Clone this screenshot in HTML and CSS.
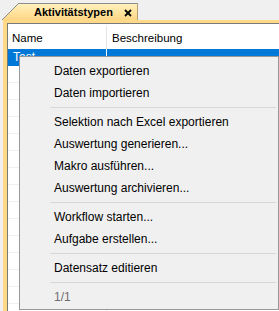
FILE: index.html
```html
<!DOCTYPE html>
<html lang="de">

<head>
    <meta charset="UTF-8">
    <meta name="viewport" content="width=device-width, initial-scale=1.0">
    <title>Aktivitätstypen</title>
    <link rel="stylesheet" href="styles.css">
</head>

<body>
    <div class="window">
        <div class="tabstrip">
            <div class="tab">
                <svg class="tab-corner" width="17" height="17" viewBox="0 0 17 17">
                    <defs>
                        <linearGradient id="tabFill" x1="0" y1="0" x2="0" y2="1">
                            <stop offset="0" stop-color="#fff1bd" />
                            <stop offset="1" stop-color="#ffd684" />
                        </linearGradient>
                    </defs>
                    <polygon points="0,17 17,0 17,17" fill="url(#tabFill)" />
                    <line x1="0" y1="17" x2="17" y2="0" stroke="#8c8c8c" stroke-width="1" />
                </svg>
                <div class="tab-body">
                    <span class="tab-title">Aktivitätstypen</span>
                    <svg class="tab-close" width="8" height="8" viewBox="0 0 8 8">
                        <path d="M1 1 L7 7 M7 1 L1 7" stroke="#000" stroke-width="1.8" />
                    </svg>
                </div>
            </div>
        </div>

        <div class="frame">
            <div class="grid">
                <div class="grid-head">
                    <div class="cell col-name">Name</div>
                    <div class="cell col-desc">Beschreibung</div>
                </div>
                <div class="grid-row selected">
                    <div class="cell col-name">Test</div>
                    <div class="cell col-desc"></div>
                </div>
                <div class="grid-row"><div class="cell col-name"></div><div class="cell col-desc"></div></div>
                <div class="grid-row"><div class="cell col-name"></div><div class="cell col-desc"></div></div>
                <div class="grid-row"><div class="cell col-name"></div><div class="cell col-desc"></div></div>
                <div class="grid-row"><div class="cell col-name"></div><div class="cell col-desc"></div></div>
                <div class="grid-row"><div class="cell col-name"></div><div class="cell col-desc"></div></div>
                <div class="grid-row"><div class="cell col-name"></div><div class="cell col-desc"></div></div>
                <div class="grid-row"><div class="cell col-name"></div><div class="cell col-desc"></div></div>
                <div class="grid-row"><div class="cell col-name"></div><div class="cell col-desc"></div></div>
                <div class="grid-row"><div class="cell col-name"></div><div class="cell col-desc"></div></div>
                <div class="grid-row"><div class="cell col-name"></div><div class="cell col-desc"></div></div>
                <div class="grid-row"><div class="cell col-name"></div><div class="cell col-desc"></div></div>
                <div class="grid-row"><div class="cell col-name"></div><div class="cell col-desc"></div></div>
                <div class="grid-row"><div class="cell col-name"></div><div class="cell col-desc"></div></div>
                <div class="grid-row"><div class="cell col-name"></div><div class="cell col-desc"></div></div>
                <div class="grid-row"><div class="cell col-name"></div><div class="cell col-desc"></div></div>
            </div>
        </div>

        <div class="context-menu">
            <div class="menu-item">Daten exportieren</div>
            <div class="menu-item">Daten importieren</div>
            <div class="menu-sep"></div>
            <div class="menu-item">Selektion nach Excel exportieren</div>
            <div class="menu-item">Auswertung generieren...</div>
            <div class="menu-item">Makro ausführen...</div>
            <div class="menu-item">Auswertung archivieren...</div>
            <div class="menu-sep"></div>
            <div class="menu-item">Workflow starten...</div>
            <div class="menu-item">Aufgabe erstellen...</div>
            <div class="menu-sep"></div>
            <div class="menu-item">Datensatz editieren</div>
            <div class="menu-sep"></div>
            <div class="menu-item disabled">1/1</div>
        </div>
    </div>
</body>

</html>
```

FILE: styles.css
```css
body {
    margin: 0;
    font-family: "Liberation Sans", Arial, sans-serif;
    background-color: #f0f0f0;
}

.window {
    position: relative;
    height: 311px;
    overflow: hidden;
    display: flex;
    flex-direction: column;
}

/* tab strip */
.tabstrip {
    flex-shrink: 0;
    height: 20px;
    display: flex;
    align-items: flex-end;
    padding-left: 2px;
}

.tab {
    display: flex;
    height: 17px;
}

.tab-corner {
    display: block;
}

.tab-body {
    width: 119px;
    box-sizing: border-box;
    border-top: 1px solid #8c8c8c;
    border-right: 1px solid #b8a070;
    background: linear-gradient(#fff1bd, #ffd684);
    display: flex;
    align-items: center;
    padding-left: 15px;
}

.tab-title {
    font-weight: bold;
    font-size: 11px;
    color: #000;
}

.tab-close {
    margin-left: 11px;
    margin-top: 1px;
}

/* yellow frame around the grid */
.frame {
    flex: 1;
    min-height: 0;
    overflow: hidden;
    margin-left: 3px;
    padding: 3px 0 0 4px;
    background-color: #ffd888;
    display: flex;
}

.grid {
    flex: 1;
    background-color: #fff;
    border-top: 1px solid #7a7a7a;
    border-left: 1px solid #7a7a7a;
}

.grid-head {
    display: flex;
    height: 25px;
    font-size: 11.5px;
    color: #000;
}

.grid-head .cell {
    margin-top: 2px;
    line-height: 24px;
}

.grid-head .col-name {
    border-right: 1px solid #e5e5e5;
}

.cell {
    box-sizing: border-box;
    padding-left: 4px;
    white-space: nowrap;
    overflow: hidden;
}

.col-name {
    width: 99px;
}

.col-desc {
    flex: 1;
    padding-left: 5px;
}

.grid-row {
    display: flex;
    height: 17px;
    box-sizing: border-box;
    border-bottom: 1px solid #f0f0f0;
    font-size: 12px;
    line-height: 17px;
}

.grid-row .col-name {
    border-right: 1px solid #f0f0f0;
    padding-left: 5px;
}

.grid-row.selected {
    background-color: #0078d7;
    color: #fff;
    border-bottom-color: #0078d7;
}

.grid-row.selected .col-name {
    border-right-color: #fff;
}

/* context menu */
.context-menu {
    position: absolute;
    left: 19px;
    top: 56px;
    width: 260px;
    box-sizing: border-box;
    padding: 3px 2px 1px;
    background-color: #f0f0f0;
    border: 1px solid #979797;
    font-size: 12px;
    color: #000;
}

.menu-item {
    height: 22px;
    line-height: 22px;
    padding-left: 32px;
    white-space: nowrap;
}

.menu-item.disabled {
    color: #6d6d6d;
}

.menu-sep {
    height: 1px;
    margin: 3px 0 3px 28px;
    background-color: #d7d7d7;
}
```
